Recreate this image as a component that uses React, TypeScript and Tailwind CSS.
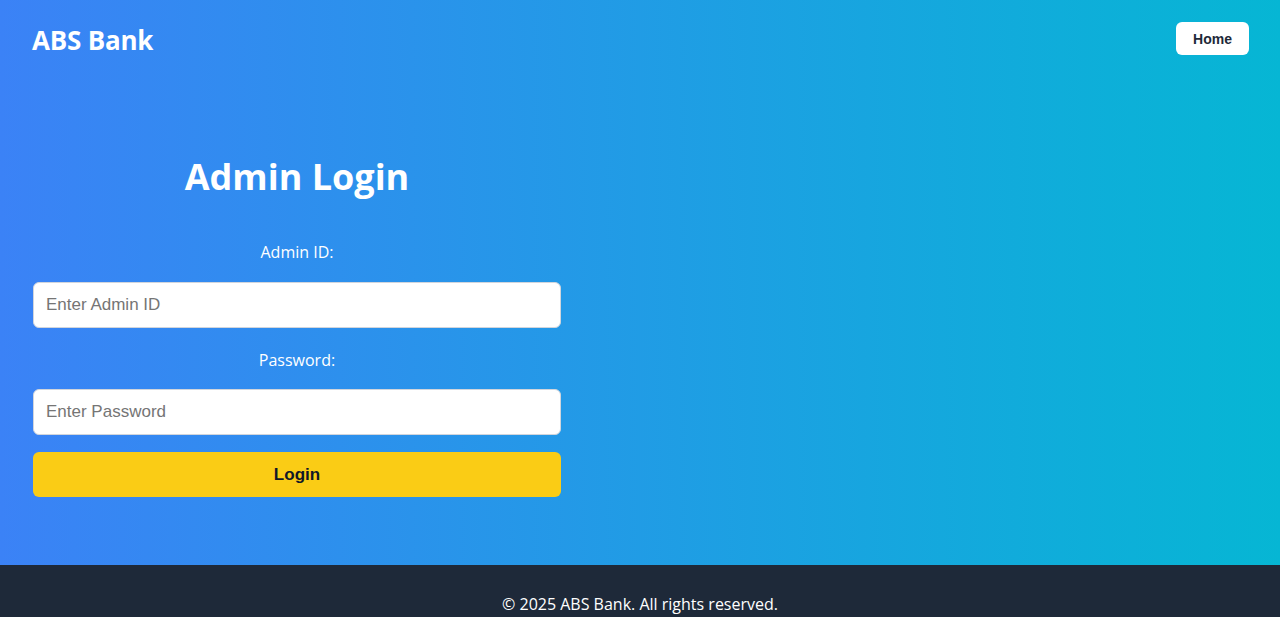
import React, { useState } from "react";

const App = () => {
  const [adminId, setAdminId] = useState("");
  const [password, setPassword] = useState("");

  return (
    <div className="min-h-screen flex flex-col font-['Open_Sans','Noto_Sans',sans-serif]">
      <div className="bg-[linear-gradient(to_right,#3b82f6,#06b6d4)] text-white">
        {/* header */}
        <header className="flex items-center justify-between pl-8 pr-[31px] h-[77px]">
          <h1 className="text-[26px] leading-8 font-bold tracking-[-0.2px] pt-[2px]">ABS Bank</h1>
          <button className="bg-white text-gray-800 rounded-md w-[73px] h-[33px] text-sm font-bold font-['Liberation_Sans',Arial,sans-serif]">
            Home
          </button>
        </header>

        {/* login */}
        <main className="pt-[80px] pb-[68px] pl-[33px]">
          <div className="w-[528px] flex flex-col text-center">
            <h2 className="text-4xl leading-10 font-bold mb-[43px]">Admin Login</h2>
            <label className="text-base leading-6 mb-[18px]">Admin ID:</label>
            <input
              value={adminId}
              onChange={(e) => setAdminId(e.target.value)}
              placeholder="Enter Admin ID"
              className="h-[46px] w-full bg-white rounded-md border border-gray-300 px-3 text-[17px] text-gray-800 placeholder:text-[#757575] outline-none mb-[20px] font-['Liberation_Sans',Arial,sans-serif]"
            />
            <label className="text-base leading-6 mb-[17px]">Password:</label>
            <input
              type="password"
              value={password}
              onChange={(e) => setPassword(e.target.value)}
              placeholder="Enter Password"
              className="h-[46px] w-full bg-white rounded-md border border-gray-300 px-3 text-[17px] text-gray-800 placeholder:text-[#757575] outline-none mb-[17px] font-['Liberation_Sans',Arial,sans-serif]"
            />
            <button className="h-[45px] w-full bg-[#facc15] rounded-md text-gray-900 text-[17px] font-bold font-['Liberation_Sans',Arial,sans-serif]">
              Login
            </button>
          </div>
        </main>
      </div>

      {/* footer */}
      <footer className="bg-gray-800 text-white text-center pt-[27px] pb-6 flex-1">
        <p className="text-base leading-6">© 2025 ABS Bank. All rights reserved.</p>
      </footer>
    </div>
  );
};

export default App;
